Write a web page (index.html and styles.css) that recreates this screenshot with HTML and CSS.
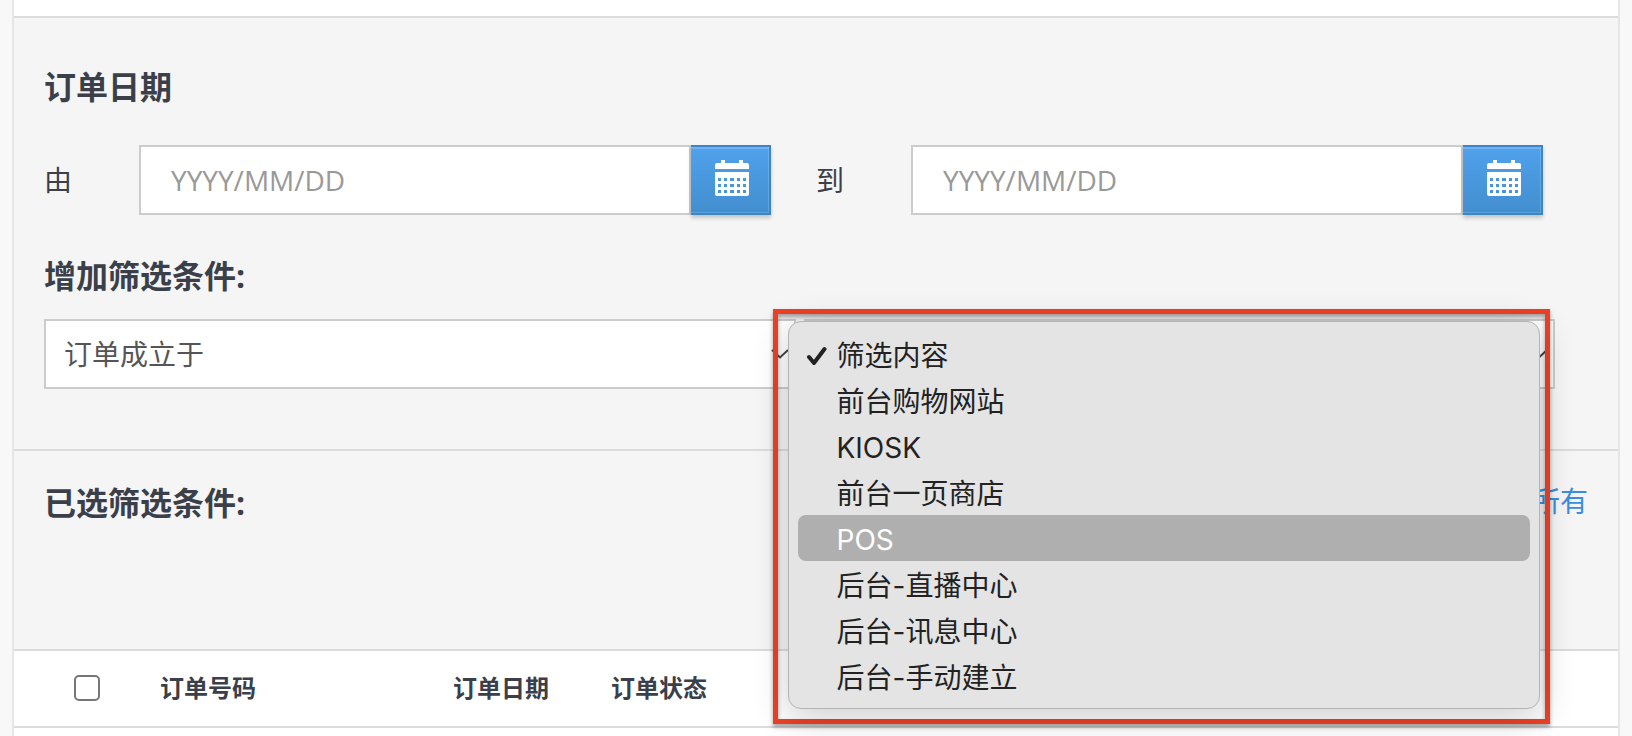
FILE: index.html
```
<!DOCTYPE html>
<html lang="zh-CN">
<head>
    <meta charset="UTF-8">
    <meta name="viewport" content="width=device-width, initial-scale=1.0">
    <title>订单</title>
    <link rel="stylesheet" href="styles.css">
</head>
<body>

<svg class="sprite" aria-hidden="true">
    <symbol id="calendar" viewBox="0 0 34 36">
        <path d="M6 0h4v3h14V0h4v3h4a2 2 0 0 1 2 2v4H0V5a2 2 0 0 1 2-2h4z"/>
        <path fill-rule="evenodd" d="M0 12h34v22a2 2 0 0 1-2 2H2a2 2 0 0 1-2-2z
            M3 18v3h3v-3zM9 18v3h3v-3zM15 18v3h4v-3zM22 18v3h3v-3zM28 18v3h3v-3z
            M3 24v3h3v-3zM9 24v3h3v-3zM15 24v3h4v-3zM22 24v3h3v-3zM28 24v3h3v-3z
            M3 30v3h3v-3zM9 30v3h3v-3zM15 30v3h4v-3zM22 30v3h3v-3zM28 30v3h3v-3z"/>
    </symbol>
    <symbol id="chevron" viewBox="0 0 18 10">
        <path d="M1 1l8 7.500 8-7.500" fill="none" stroke="#444" stroke-width="2"/>
    </symbol>
</svg>

<main class="panel">
    <section class="filters">
        <h2 class="title">订单日期</h2>
        <div class="dates">
            <label for="from">由</label>
            <div class="date">
                <input type="text" id="from" placeholder="YYYY/MM/DD">
                <button type="button" aria-label="由"><svg><use href="#calendar"/></svg></button>
            </div>
            <label for="to">到</label>
            <div class="date">
                <input type="text" id="to" placeholder="YYYY/MM/DD">
                <button type="button" aria-label="到"><svg><use href="#calendar"/></svg></button>
            </div>
        </div>

        <h2 class="title"><label for="condition">增加筛选条件:</label></h2>
        <div class="conditions">
            <div class="select">
                <select id="condition">
                    <option>订单成立于</option>
                </select>
                <svg><use href="#chevron"/></svg>
            </div>
            <div class="select">
                <select id="content" aria-label="筛选内容">
                    <option></option>
                </select>
                <svg><use href="#chevron"/></svg>

                <div class="frame">
                    <div class="menu" role="listbox" aria-label="筛选内容">
                        <button type="button" role="option" aria-selected="true">
                            <svg class="tick" viewBox="0 0 20 20"><path d="M2 11l5 6L17.500 3"/></svg>筛选内容</button>
                        <button type="button" role="option">前台购物网站</button>
                        <button type="button" role="option">KIOSK</button>
                        <button type="button" role="option">前台一页商店</button>
                        <button type="button" role="option" class="active">POS</button>
                        <button type="button" role="option">后台-直播中心</button>
                        <button type="button" role="option">后台-讯息中心</button>
                        <button type="button" role="option">后台-手动建立</button>
                    </div>
                </div>
            </div>
        </div>
    </section>

    <section class="chosen">
        <h2 class="title">已选筛选条件:</h2>
        <a href="#">所有</a>
    </section>

    <table class="orders">
        <thead>
            <tr>
                <th class="check"><input type="checkbox" aria-label="订单"></th>
                <th class="number">订单号码</th>
                <th class="day">订单日期</th>
                <th>订单状态</th>
            </tr>
        </thead>
    </table>
</main>

</body>
</html>
```
FILE: styles.css
```
*{
    box-sizing: border-box;
}
html, body{
    height: 100%;
}
body{
    margin: 0;
    padding: 0 12px;
    overflow: hidden;
    background: #f8f8f8;
    color: #3a3f4a;
    font-family: "Open Sans", "Noto Sans CJK SC", sans-serif;
    font-size: 28px;
    line-height: 40px;
}
input, select, button{
    margin: 0;
    font: inherit;
    border-radius: 0;
}
.sprite{
    display: none;
}

.panel{
    min-height: 100%;
    padding-top: 16px;
    background: #fff;
    border: solid #e6e6e6;
    border-width: 0 2px;
}
.title{
    margin: 0 0 2px;
    font-size: 32px;
    font-weight: bold;
    line-height: 42px;
}

/* filters */
.filters{
    padding: 48px 63px 60px 30px;
    background: #f5f5f5;
    border-top: 2px solid #dcdcdc;
}
.dates{
    display: flex;
    align-items: center;
    padding: 35px 12px 40px 0;
}
.dates label{
    width: 95px;
}
.dates .date + label{
    width: 140px;
    padding-left: 45px;
}
.date{
    flex: 1;
    display: flex;
    height: 70px;
}
.date input{
    flex: 1;
    min-width: 0;
    padding: 0 30px;
    background: #fff;
    border: 2px solid #ccc;
}
.date input::placeholder{
    color: #999;
    opacity: 1;
}
.date button{
    width: 80px;
    padding: 0 0 4px 4px;
    display: flex;
    align-items: center;
    justify-content: center;
    color: #fff;
    background: linear-gradient(#50a1ec, #428fcf);
    border: 2px solid #3b86c6;
    border-left-width: 0;
    box-shadow: inset 0 2px 1px rgba(255, 255, 255, .2), inset -1px -1px 0 rgba(255, 255, 255, .15), 0 3px 4px rgba(0, 0, 0, .2);
}
.date svg{
    width: 34px;
    height: 36px;
    fill: currentColor;
}
.conditions{
    display: flex;
    gap: 8px;
    padding-top: 20px;
}
.select{
    flex: 1;
    position: relative;
}
.select select{
    display: block;
    width: 100%;
    height: 70px;
    padding: 0 18px;
    appearance: none;
    color: #555;
    background: #fff;
    border: 2px solid #ccc;
}
.select > svg{
    position: absolute;
    top: 30px;
    right: 7px;
    width: 18px;
    height: 10px;
    pointer-events: none;
}

/* open menu */
.frame{
    position: absolute;
    z-index: 1;
    top: -10px;
    left: -31px;
    right: 5px;
    padding: 7px 5px 10px 10px;
    border: 5px solid #ec4126;
    box-shadow: 0 3px 4px rgba(0, 0, 0, .35), inset 0 3px 4px rgba(0, 0, 0, .35);
}
.menu{
    padding: 9px;
    background: #e4e4e4;
    border: 1px solid #b4b4b4;
    border-radius: 13px;
    box-shadow: 0 8px 36px rgba(0, 0, 0, .2);
}
.menu button{
    position: relative;
    display: block;
    width: 100%;
    height: 46px;
    padding: 3px 0 0 39px;
    border: 0;
    border-radius: 8px;
    background: none;
    color: #222;
    font-family: Inter, "Noto Sans CJK SC", sans-serif;
    text-align: left;
}
.menu .active{
    background: #afafaf;
    color: #fff;
}
.tick{
    position: absolute;
    top: 15px;
    left: 9px;
    width: 20px;
    height: 20px;
    fill: none;
    stroke: #222;
    stroke-width: 4;
    stroke-linecap: round;
    stroke-linejoin: round;
}

/* chosen filters */
.chosen{
    display: flex;
    justify-content: space-between;
    align-items: flex-start;
    min-height: 200px;
    padding: 31px 30px 0;
    background: #f5f5f5;
    border-top: 2px solid #dcdcdc;
}
.chosen a{
    color: #3b8ddd;
    line-height: 38px;
    text-decoration: none;
}

/* orders */
.orders{
    width: 100%;
    table-layout: fixed;
    border-spacing: 0;
    border: solid #dcdcdc;
    border-width: 2px 0;
}
.orders th{
    height: 75px;
    padding: 0 0 1px;
    font-size: 24px;
    text-align: left;
}
.orders .check{
    width: 146px;
    padding-left: 60px;
}
.orders .number{
    width: 293px;
}
.orders .day{
    width: 158px;
}
.orders input{
    display: block;
    appearance: none;
    width: 26px;
    height: 26px;
    background: #fff;
    border: 2px solid #767676;
    border-radius: 5px;
}
```
